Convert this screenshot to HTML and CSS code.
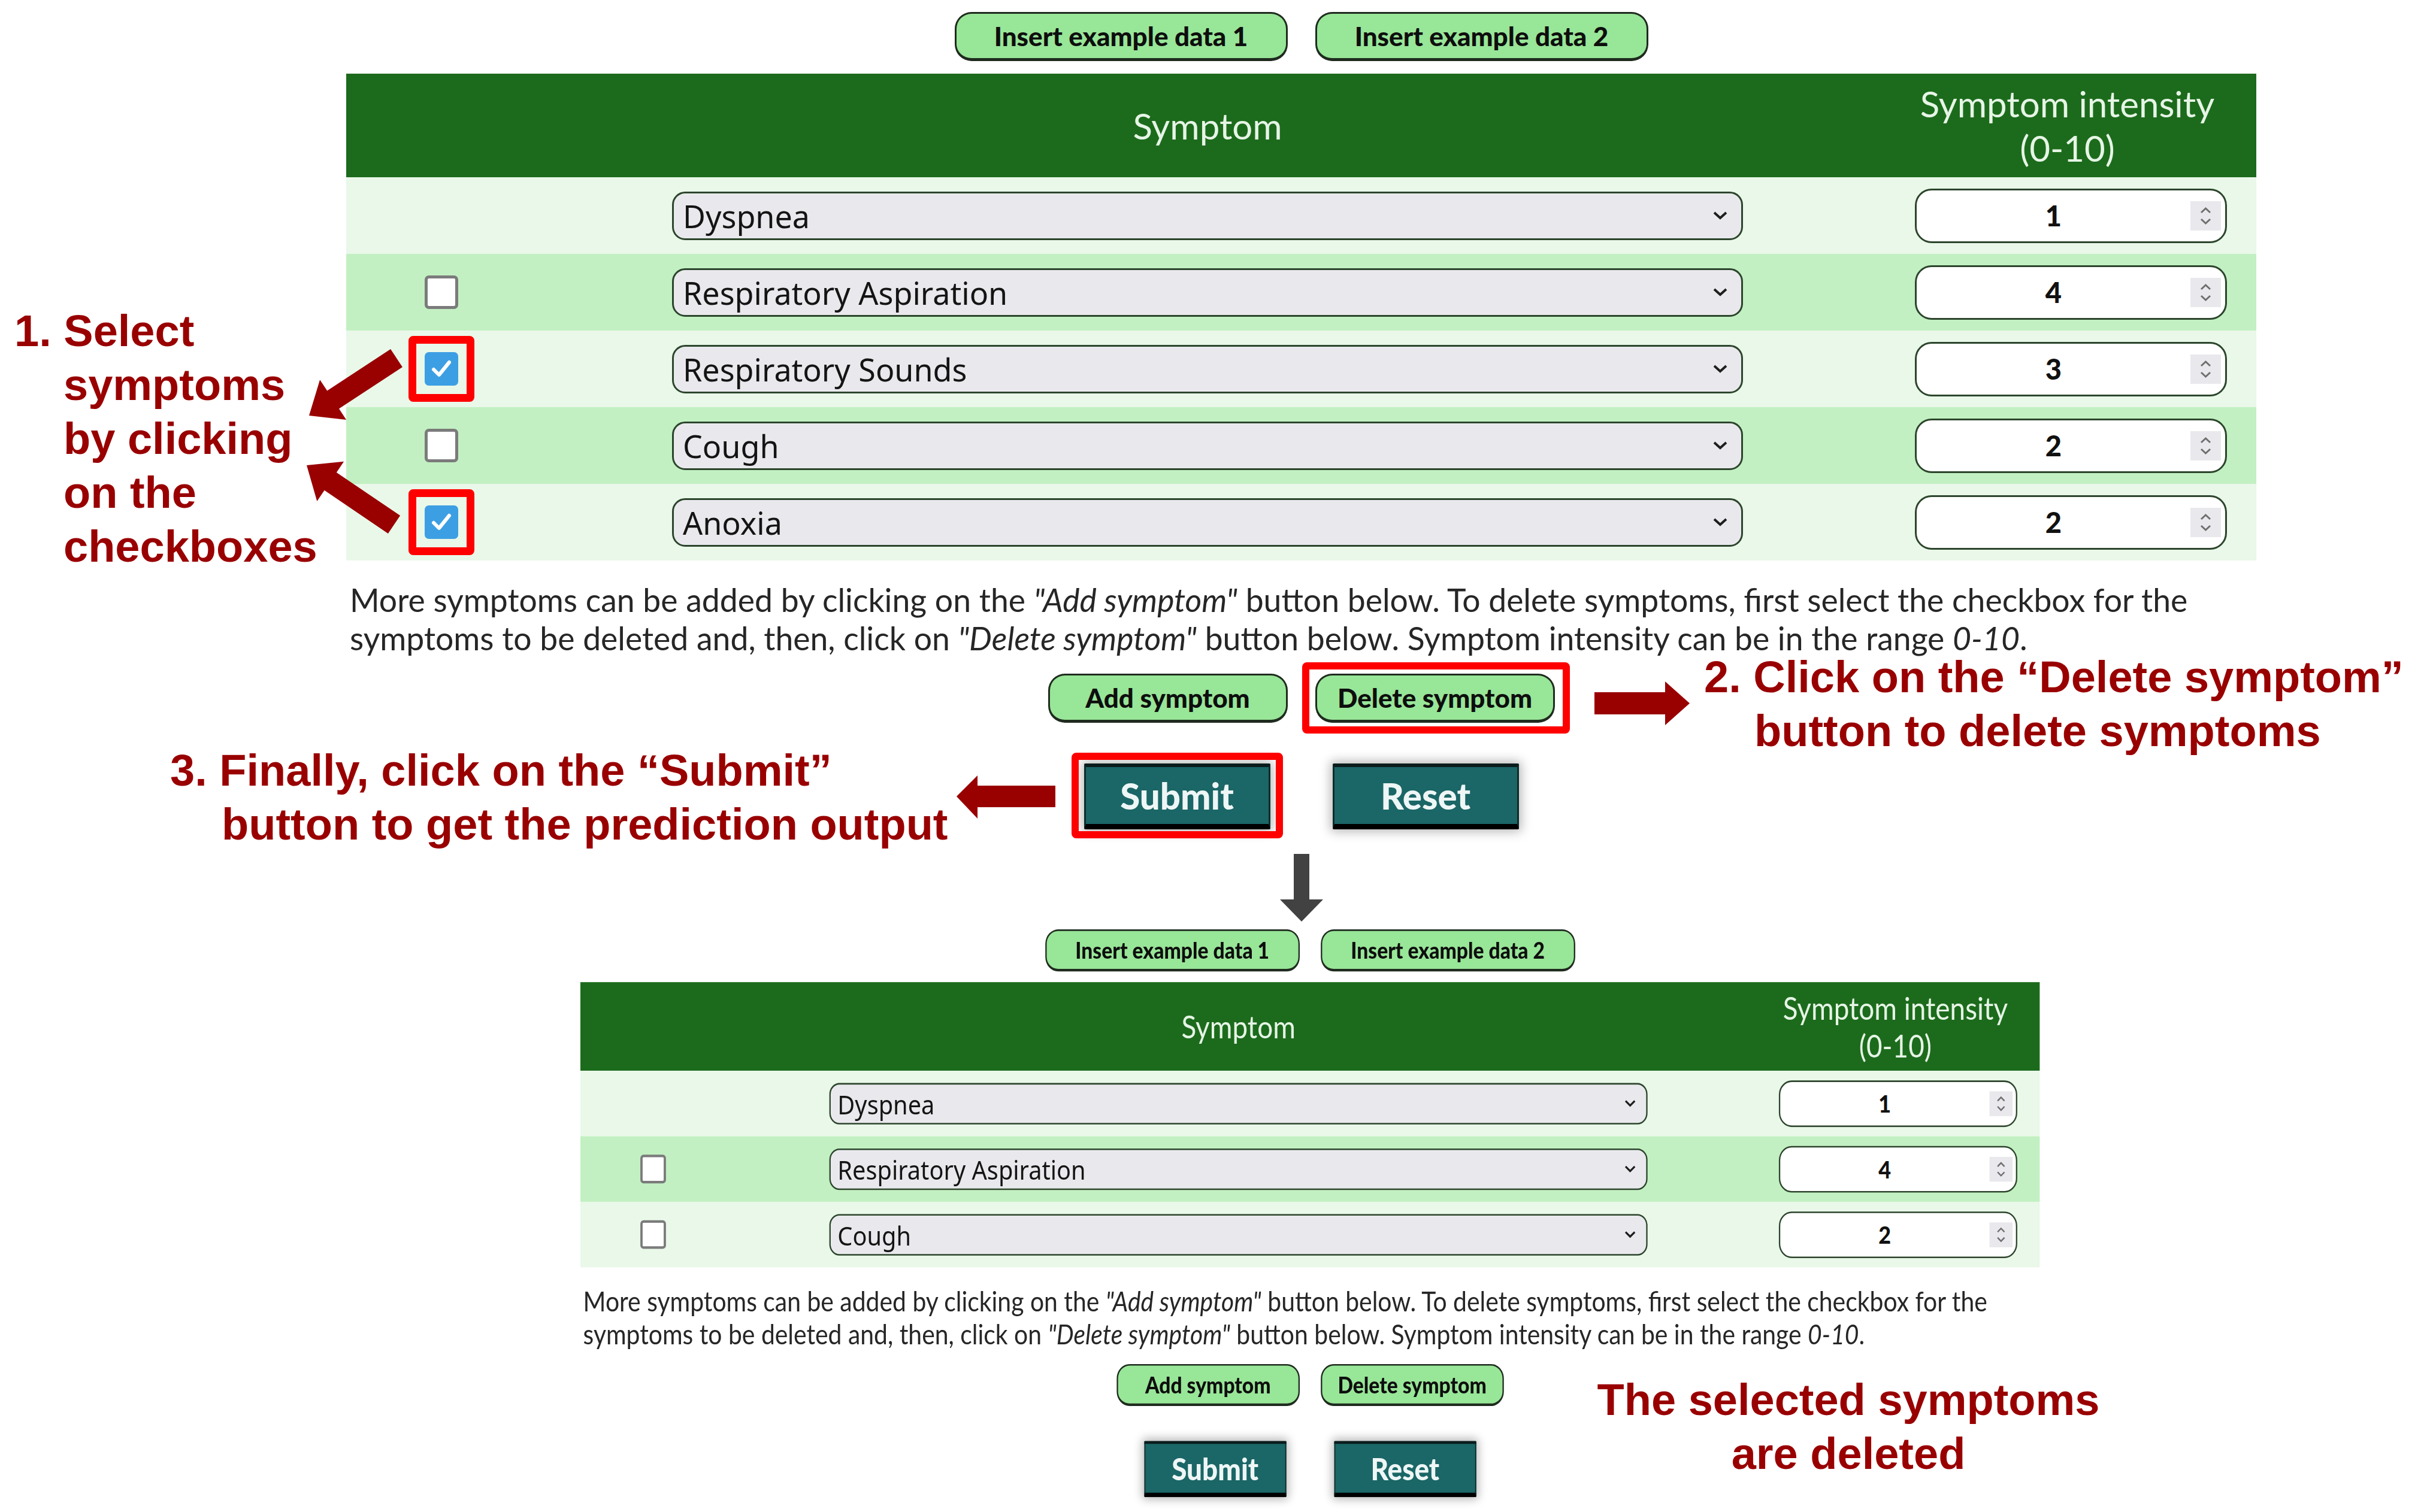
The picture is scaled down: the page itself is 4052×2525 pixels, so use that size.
FILE: index.html
```html
<!DOCTYPE html>
<html lang="en">
<head>
<meta charset="utf-8">
<title>Symptom form – deleting symptoms</title>
<link rel="stylesheet" href="styles.css">
</head>
<body>
<main class="page">

  <section class="panel panel-main">
    <div class="btn-row">
      <button class="btn-light btn-insert">Insert example data 1</button>
      <button class="btn-light btn-insert">Insert example data 2</button>
    </div>
    <div class="table">
      <div class="thead">
        <div></div>
        <div>Symptom</div>
        <div>Symptom intensity<br>(0-10)</div>
      </div>
      <div class="tbody">
        <div class="row">
          <div class="cell"></div>
          <div class="cell"><div class="select"><span>Dyspnea</span><svg class="chev" width="28" height="18" viewBox="0 0 28 18"><polyline points="4,4 14,13 24,4"/></svg></div></div>
          <div class="cell cell-int"><div class="num"><span class="num-val">1</span><svg class="spin" width="51" height="49" viewBox="0 0 51 49"><rect width="51" height="49"/><polyline points="18,19 25.5,12 33,19"/><polyline points="18,30 25.5,37 33,30"/></svg></div></div>
        </div>
        <div class="row">
          <div class="cell"><span class="cb"></span></div>
          <div class="cell"><div class="select"><span>Respiratory Aspiration</span><svg class="chev" width="28" height="18" viewBox="0 0 28 18"><polyline points="4,4 14,13 24,4"/></svg></div></div>
          <div class="cell cell-int"><div class="num"><span class="num-val">4</span><svg class="spin" width="51" height="49" viewBox="0 0 51 49"><rect width="51" height="49"/><polyline points="18,19 25.5,12 33,19"/><polyline points="18,30 25.5,37 33,30"/></svg></div></div>
        </div>
        <div class="row">
          <div class="cell"><span class="cb is-checked hl"><svg width="56" height="56" viewBox="0 0 56 56"><polyline points="15,29 24,38 41,17"/></svg></span></div>
          <div class="cell"><div class="select"><span>Respiratory Sounds</span><svg class="chev" width="28" height="18" viewBox="0 0 28 18"><polyline points="4,4 14,13 24,4"/></svg></div></div>
          <div class="cell cell-int"><div class="num"><span class="num-val">3</span><svg class="spin" width="51" height="49" viewBox="0 0 51 49"><rect width="51" height="49"/><polyline points="18,19 25.5,12 33,19"/><polyline points="18,30 25.5,37 33,30"/></svg></div></div>
        </div>
        <div class="row">
          <div class="cell"><span class="cb"></span></div>
          <div class="cell"><div class="select"><span>Cough</span><svg class="chev" width="28" height="18" viewBox="0 0 28 18"><polyline points="4,4 14,13 24,4"/></svg></div></div>
          <div class="cell cell-int"><div class="num"><span class="num-val">2</span><svg class="spin" width="51" height="49" viewBox="0 0 51 49"><rect width="51" height="49"/><polyline points="18,19 25.5,12 33,19"/><polyline points="18,30 25.5,37 33,30"/></svg></div></div>
        </div>
        <div class="row">
          <div class="cell"><span class="cb is-checked hl"><svg width="56" height="56" viewBox="0 0 56 56"><polyline points="15,29 24,38 41,17"/></svg></span></div>
          <div class="cell"><div class="select"><span>Anoxia</span><svg class="chev" width="28" height="18" viewBox="0 0 28 18"><polyline points="4,4 14,13 24,4"/></svg></div></div>
          <div class="cell cell-int"><div class="num"><span class="num-val">2</span><svg class="spin" width="51" height="49" viewBox="0 0 51 49"><rect width="51" height="49"/><polyline points="18,19 25.5,12 33,19"/><polyline points="18,30 25.5,37 33,30"/></svg></div></div>
        </div>
      </div>
    </div>
    <p class="desc">More symptoms can be added by clicking on the <em>"Add symptom"</em> button below. To delete symptoms, first select the checkbox for the<br>symptoms to be deleted and, then, click on <em>"Delete symptom"</em> button below. Symptom intensity can be in the range <em>0-10</em>.</p>
    <div class="btn-row btn-row-edit">
      <button class="btn-light btn-edit">Add symptom</button>
      <button class="btn-light btn-edit hl hl-delete">Delete symptom</button>
    </div>
    <div class="btn-row btn-row-submit">
      <button class="btn-dark hl hl-submit">Submit</button>
      <button class="btn-dark">Reset</button>
    </div>
  </section>

  <div class="flow-arrow">
    <svg width="72" height="114" viewBox="0 0 72 114"><polygon points="23,0 49,0 49,76 72,76 36,113 0,76 23,76"/></svg>
  </div>

  <section class="panel panel-result">
    <div class="btn-row">
      <button class="btn-light btn-insert">Insert example data 1</button>
      <button class="btn-light btn-insert">Insert example data 2</button>
    </div>
    <div class="table">
      <div class="thead">
        <div></div>
        <div>Symptom</div>
        <div>Symptom intensity<br>(0-10)</div>
      </div>
      <div class="tbody">
        <div class="row">
          <div class="cell"></div>
          <div class="cell"><div class="select"><span>Dyspnea</span><svg class="chev" width="28" height="18" viewBox="0 0 28 18"><polyline points="4,4 14,13 24,4"/></svg></div></div>
          <div class="cell cell-int"><div class="num"><span class="num-val">1</span><svg class="spin" width="51" height="49" viewBox="0 0 51 49"><rect width="51" height="49"/><polyline points="18,19 25.5,12 33,19"/><polyline points="18,30 25.5,37 33,30"/></svg></div></div>
        </div>
        <div class="row">
          <div class="cell"><span class="cb"></span></div>
          <div class="cell"><div class="select"><span>Respiratory Aspiration</span><svg class="chev" width="28" height="18" viewBox="0 0 28 18"><polyline points="4,4 14,13 24,4"/></svg></div></div>
          <div class="cell cell-int"><div class="num"><span class="num-val">4</span><svg class="spin" width="51" height="49" viewBox="0 0 51 49"><rect width="51" height="49"/><polyline points="18,19 25.5,12 33,19"/><polyline points="18,30 25.5,37 33,30"/></svg></div></div>
        </div>
        <div class="row">
          <div class="cell"><span class="cb"></span></div>
          <div class="cell"><div class="select"><span>Cough</span><svg class="chev" width="28" height="18" viewBox="0 0 28 18"><polyline points="4,4 14,13 24,4"/></svg></div></div>
          <div class="cell cell-int"><div class="num"><span class="num-val">2</span><svg class="spin" width="51" height="49" viewBox="0 0 51 49"><rect width="51" height="49"/><polyline points="18,19 25.5,12 33,19"/><polyline points="18,30 25.5,37 33,30"/></svg></div></div>
        </div>
      </div>
    </div>
    <p class="desc">More symptoms can be added by clicking on the <em>"Add symptom"</em> button below. To delete symptoms, first select the checkbox for the<br>symptoms to be deleted and, then, click on <em>"Delete symptom"</em> button below. Symptom intensity can be in the range <em>0-10</em>.</p>
    <div class="btn-row btn-row-edit">
      <button class="btn-light btn-edit">Add symptom</button>
      <button class="btn-light btn-edit">Delete symptom</button>
    </div>
    <div class="btn-row btn-row-submit">
      <button class="btn-dark">Submit</button>
      <button class="btn-dark">Reset</button>
    </div>
  </section>

  <p class="note note-select">1. Select<br>symptoms<br>by clicking<br>on the<br>checkboxes</p>
  <p class="note note-delete">2. Click on the “Delete symptom”<br>button to delete symptoms</p>
  <p class="note note-submit">3. Finally, click on the “Submit”<br>button to get the prediction output</p>
  <p class="note note-result">The selected symptoms<br>are deleted</p>

  <svg class="callouts" width="4052" height="2525" viewBox="0 0 4052 2525">
    <polygon points="671.9,613 652.1,583 546.2,652.6 534.1,634.2 516,694 578.1,701 566,682.6"/>
    <polygon points="668.1,861.1 647.9,890.9 541.6,818.8 529.3,837 512,777 574.1,770.8 561.8,789"/>
    <polygon points="2662,1156 2780,1156 2780,1138 2821,1174.5 2780,1211 2780,1193 2662,1193"/>
    <polygon points="1762,1312 1632,1312 1632,1295 1597,1330 1632,1367 1632,1348 1762,1348"/>
  </svg>

</main>
</body>
</html>
```

FILE: styles.css
```css
html, body {
  margin: 0;
  padding: 0;
  background: #ffffff;
}

body {
  font-family: Lato, "Open Sans", sans-serif;
  color: #222222;
}

.page {
  position: relative;
  width: 4052px;
  height: 2525px;
  overflow: hidden;
}

/* ---------- form panel ---------- */
.panel {
  width: 3189px;
  padding-top: 20px;
}

.panel-main {
  margin-left: 578px;
}

.panel-result {
  margin-left: 969px;
  transform: scale(0.764, 0.855);
  transform-origin: 0 0;
}

.btn-row {
  display: flex;
  justify-content: center;
  gap: 46px;
}

.btn-row-edit {
  margin-top: 28px;
}

.btn-row-submit {
  margin-top: 68px;
  gap: 104px;
}

button {
  margin: 0;
  padding: 0;
  cursor: pointer;
}

.btn-light {
  height: 82px;
  box-sizing: border-box;
  border: 3px solid #1f2b1f;
  border-bottom-width: 5px;
  border-radius: 28px;
  background: #98e698;
  color: #0e0e0e;
  font-family: Lato, sans-serif;
  font-weight: 900;
  font-size: 44px;
  display: flex;
  align-items: center;
  justify-content: center;
}

.btn-insert {
  width: 556px;
}

.btn-edit {
  width: 400px;
}

.btn-dark {
  width: 311px;
  height: 110px;
  box-sizing: border-box;
  background: #1b6666;
  color: #eef6f6;
  font-family: Lato, sans-serif;
  font-weight: 900;
  font-size: 60px;
  border: 3px solid #0d2c2c;
  border-top: 6px solid #0b1c1c;
  border-bottom: 9px solid #000000;
  border-radius: 2px;
  box-shadow: 0 0 18px 4px rgba(0, 0, 0, 0.28);
  display: flex;
  align-items: center;
  justify-content: center;
}

/* red highlight frames */
.hl {
  position: relative;
}

.hl::after {
  content: "";
  position: absolute;
  inset: -27px;
  border: 13px solid #ff0000;
  border-radius: 8px;
  pointer-events: none;
}

.hl-delete::after {
  inset: -22px -28px -23px -25px;
  border-width: 12px;
}

.hl-submit::after {
  inset: -24px;
  border-width: 12px;
}

/* ---------- table ---------- */
.table {
  margin-top: 21px;
}

.thead,
.row {
  display: grid;
  grid-template-columns: 318px 2240px 631px;
  align-items: center;
}

.thead {
  height: 173px;
  background: #1c6b1c;
  color: #e6f5e6;
  font-size: 60px;
  line-height: 74px;
  text-align: center;
}

.row {
  height: 128px;
  background: #e9f8e9;
}

.row:nth-child(even) {
  background: #c2f0c2;
}

.cell {
  display: flex;
  justify-content: center;
  align-items: center;
}

.cell-int {
  padding-left: 12px;
}

.select {
  width: 1788px;
  height: 81px;
  box-sizing: border-box;
  border: 3px solid #2c452c;
  border-radius: 22px;
  background: #e9e9ed;
  display: flex;
  align-items: center;
  justify-content: space-between;
  padding: 0 21px 0 15px;
  font-family: "Noto Sans", "Open Sans", sans-serif;
  font-size: 52px;
  color: #141414;
}

.chev polyline {
  fill: none;
  stroke: #1e1e1e;
  stroke-width: 4;
}

.num {
  width: 521px;
  height: 91px;
  box-sizing: border-box;
  border: 3px solid #2c452c;
  border-radius: 28px;
  background: #ffffff;
  display: flex;
  align-items: center;
  padding-right: 7px;
}

.num-val {
  flex: 1;
  text-align: center;
  font-weight: 900;
  font-size: 47px;
  color: #111111;
}

.spin rect {
  fill: #e9e9ed;
}

.spin polyline {
  fill: none;
  stroke: #6f6f6f;
  stroke-width: 3;
}

.cb {
  width: 56px;
  height: 56px;
  box-sizing: border-box;
  border: 5px solid #7b7b7b;
  border-radius: 7px;
  background: #ffffff;
  display: block;
}

.cb.is-checked {
  border: none;
  background: #3d9fe3;
}

.cb svg {
  display: block;
}

.cb polyline {
  fill: none;
  stroke: #ffffff;
  stroke-width: 6;
  stroke-linecap: round;
  stroke-linejoin: round;
}

.desc {
  margin: 33px 0 0 6px;
  font-size: 53.5px;
  line-height: 64px;
  color: #262626;
  white-space: nowrap;
}

/* ---------- arrow between before/after ---------- */
.flow-arrow {
  margin-left: 578px;
  width: 3189px;
  height: 150px;
  display: flex;
  justify-content: center;
}

.flow-arrow svg {
  margin-top: 41px;
  fill: #424242;
}

/* ---------- annotations ---------- */
.note {
  position: absolute;
  margin: 0;
  font-family: "Liberation Sans", Arial, sans-serif;
  font-weight: 700;
  font-size: 74px;
  line-height: 90px;
  color: #990000;
  white-space: nowrap;
}

.note-select {
  left: 24px;
  top: 508px;
  padding-left: 82px;
  text-indent: -82px;
}

.note-delete {
  left: 2845px;
  top: 1086px;
  padding-left: 84px;
  text-indent: -84px;
}

.note-submit {
  left: 284px;
  top: 1242px;
  padding-left: 86px;
  text-indent: -86px;
}

.note-result {
  left: 2586px;
  top: 2293px;
  width: 1000px;
  text-align: center;
}

.callouts {
  position: absolute;
  left: 0;
  top: 0;
  pointer-events: none;
  fill: #990000;
}
```
